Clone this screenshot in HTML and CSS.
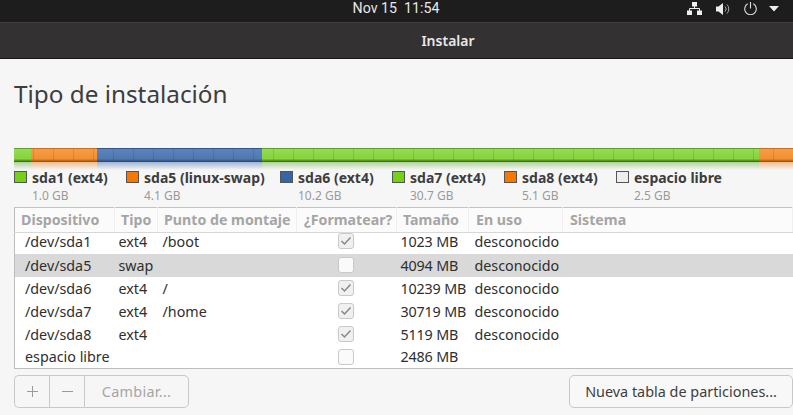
FILE: index.html
```html
<!DOCTYPE html>
<html lang="es">
<head>
    <meta charset="UTF-8">
    <meta name="viewport" content="width=device-width, initial-scale=1.0">
    <title>Instalar</title>
    <link rel="stylesheet" href="styles.css">
</head>
<body>
    <!-- Top panel -->
    <div class="panel">
        <div class="clock">Nov 15&nbsp;&nbsp;11:54</div>
        <div class="tray">
            <svg class="tray-net" width="15" height="13" viewBox="0 0 15 13">
                <path fill="#eee" d="M5 0h5v4.500H5zM0 8.500h5V13H0zM10 8.500h5V13h-5z"/>
                <path fill="none" stroke="#eee" d="M7.500 4v3M2.500 9V6.500h10V9"/>
            </svg>
            <svg class="tray-vol" width="14" height="12" viewBox="0 0 14 12">
                <path fill="#eee" d="M0 3.500h2.500L7 0v12L2.500 8.500H0z"/>
                <path fill="none" stroke="#aaa" d="M9 3.500a3.500 3.500 0 0 1 0 5M11 1.500a6.500 6.500 0 0 1 0 9"/>
            </svg>
            <svg class="tray-pow" width="13" height="13" viewBox="0 0 13 13">
                <path fill="none" stroke="#ddd" stroke-width="1.100" d="M3.700 1.800a5.800 5.800 0 1 0 5.600 0M6.500 0v6.500"/>
            </svg>
            <svg class="tray-arrow" width="10" height="6" viewBox="0 0 10 6">
                <path fill="#eee" d="M0 0h10L5 5.500z"/>
            </svg>
        </div>
    </div>

    <div class="titlebar">Instalar</div>

    <div class="content">
        <h1>Tipo de instalación</h1>

        <!-- Partition bar -->
        <div class="disk-bar">
            <div class="seg seg-green" style="width: 17px"></div>
            <div class="seg seg-orange" style="width: 66px"></div>
            <div class="seg seg-blue" style="width: 165px"></div>
            <div class="seg seg-green" style="width: 497px"></div>
            <div class="seg seg-orange" style="width: 34px"></div>
        </div>

        <!-- Legend -->
        <div class="legend">
            <div class="legend-item item-sda1">
                <span class="swatch swatch-green"></span>
                <div><div class="legend-name">sda1 (ext4)</div><div class="legend-size">1.0 GB</div></div>
            </div>
            <div class="legend-item item-sda5">
                <span class="swatch swatch-orange"></span>
                <div><div class="legend-name">sda5 (linux-swap)</div><div class="legend-size">4.1 GB</div></div>
            </div>
            <div class="legend-item item-sda6">
                <span class="swatch swatch-blue"></span>
                <div><div class="legend-name">sda6 (ext4)</div><div class="legend-size">10.2 GB</div></div>
            </div>
            <div class="legend-item item-sda7">
                <span class="swatch swatch-green"></span>
                <div><div class="legend-name">sda7 (ext4)</div><div class="legend-size">30.7 GB</div></div>
            </div>
            <div class="legend-item item-sda8">
                <span class="swatch swatch-orange"></span>
                <div><div class="legend-name">sda8 (ext4)</div><div class="legend-size">5.1 GB</div></div>
            </div>
            <div class="legend-item">
                <span class="swatch swatch-free"></span>
                <div><div class="legend-name">espacio libre</div><div class="legend-size">2.5 GB</div></div>
            </div>
        </div>

        <!-- Partition table -->
        <table class="parts">
            <thead>
                <tr>
                    <th class="col-dev">Dispositivo</th>
                    <th class="col-type">Tipo</th>
                    <th class="col-mount">Punto de montaje</th>
                    <th class="col-format">¿Formatear?</th>
                    <th class="col-size">Tamaño</th>
                    <th class="col-use">En uso</th>
                    <th class="col-sys">Sistema</th>
                </tr>
            </thead>
            <tbody>
                <tr class="row-first">
                    <td>/dev/sda1</td><td class="cell-type">ext4</td><td>/boot</td>
                    <td class="cell-check"><span class="check is-on"><svg width="12" height="10" viewBox="0 0 12 10"><path fill="none" stroke="#888" stroke-width="1.500" d="M1.500 5l3 3 6-6.500"/></svg></span></td>
                    <td class="cell-size">1023 MB</td><td class="cell-use">desconocido</td><td></td>
                </tr>
                <tr class="selected">
                    <td>/dev/sda5</td><td class="cell-type">swap</td><td></td>
                    <td class="cell-check"><span class="check"></span></td>
                    <td class="cell-size">4094 MB</td><td class="cell-use">desconocido</td><td></td>
                </tr>
                <tr>
                    <td>/dev/sda6</td><td class="cell-type">ext4</td><td>/</td>
                    <td class="cell-check"><span class="check is-on"><svg width="12" height="10" viewBox="0 0 12 10"><path fill="none" stroke="#888" stroke-width="1.500" d="M1.500 5l3 3 6-6.500"/></svg></span></td>
                    <td class="cell-size">10239 MB</td><td class="cell-use">desconocido</td><td></td>
                </tr>
                <tr>
                    <td>/dev/sda7</td><td class="cell-type">ext4</td><td>/home</td>
                    <td class="cell-check"><span class="check is-on"><svg width="12" height="10" viewBox="0 0 12 10"><path fill="none" stroke="#888" stroke-width="1.500" d="M1.500 5l3 3 6-6.500"/></svg></span></td>
                    <td class="cell-size">30719 MB</td><td class="cell-use">desconocido</td><td></td>
                </tr>
                <tr>
                    <td>/dev/sda8</td><td class="cell-type">ext4</td><td></td>
                    <td class="cell-check"><span class="check is-on"><svg width="12" height="10" viewBox="0 0 12 10"><path fill="none" stroke="#888" stroke-width="1.500" d="M1.500 5l3 3 6-6.500"/></svg></span></td>
                    <td class="cell-size">5119 MB</td><td class="cell-use">desconocido</td><td></td>
                </tr>
                <tr>
                    <td class="cell-free" colspan="2">espacio libre</td><td></td>
                    <td class="cell-check"><span class="check"></span></td>
                    <td class="cell-size">2486 MB</td><td></td><td></td>
                </tr>
            </tbody>
        </table>

        <!-- Buttons -->
        <div class="actions">
            <div class="btn-group">
                <button class="btn btn-icon" type="button" disabled><svg width="11" height="11" viewBox="0 0 11 11"><path stroke="#999" d="M5.500 0v11M0 5.500h11"/></svg></button>
                <button class="btn btn-icon" type="button" disabled><svg width="11" height="11" viewBox="0 0 11 11"><path stroke="#999" d="M0 5.500h11"/></svg></button>
                <button class="btn btn-change" type="button" disabled>Cambiar...</button>
            </div>
            <button class="btn btn-new" type="button">Nueva tabla de particiones...</button>
        </div>
    </div>
</body>
</html>
```

FILE: styles.css
```css
body {
    font-family: "Noto Sans", "Open Sans", sans-serif;
    font-size: 14px;
    margin: 0;
    padding: 0;
    height: 415px;
    overflow: hidden;
    background-color: #f6f6f6;
    color: #3d3d3d;
}

/* top panel */
.panel {
    display: flex;
    justify-content: center;
    position: relative;
    height: 22px;
    background-color: #1d1d1d;
    border-bottom: 1px solid #3f3e3e;
}
.clock {
    font-family: Roboto, "Noto Sans", sans-serif;
    color: #e8e8e8;
    font-size: 14.200px;
    line-height: 17px;
    margin-right: 1px;
}
.tray {
    position: absolute;
    top: 1px;
    right: 14px;
    height: 14px;
    display: flex;
    align-items: center;
}
.tray-net { margin-right: 14px; }
.tray-vol { margin-right: 14px; margin-top: 2px; }
.tray-pow { margin-right: 12px; }
.tray-arrow { margin-top: 2px; }

.titlebar {
    height: 35px;
    line-height: 36px;
    padding-left: 103px;
    text-align: center;
    color: #e8e8e8;
    font-size: 14px;
    font-weight: 600;
    background-color: #333131;
    border-bottom: 1px solid #191919;
}

.content {
    padding-top: 18px;
}
h1 {
    margin: 0 0 0 14px;
    height: 71px;
    font-size: 24.300px;
    font-weight: 400;
    line-height: 33px;
    color: #3d3d3d;
}

/* partition bar */
.disk-bar {
    display: flex;
    position: relative;
    margin-left: 14px;
    height: 22px;
}
/* tick marks run over all the segments */
.disk-bar::after {
    content: "";
    position: absolute;
    left: 0;
    right: 0;
    top: 1px;
    height: 12px;
    background-image: linear-gradient(to right, transparent 19px, rgba(0, 0, 0, 0.1) 19px, rgba(0, 0, 0, 0.1) 20px);
    background-size: 20px 12px;
}
.seg {
    flex: none;
    height: 22px;
    box-sizing: border-box;
    border-top: 1px solid;
    background-size: 100% 13px, 100% 8px;
    background-repeat: no-repeat, no-repeat;
    background-position: 0 0, 0 13px;
}
.seg-green {
    border-top-color: #5f9f2b;
    background-image:
        linear-gradient(#93dd4f, #86d23f 75%, #5c9a25 88%, #2f5a10),
        linear-gradient(rgba(120, 180, 80, 0.55), rgba(246, 246, 246, 0));
}
.seg-orange {
    border-top-color: #c9701c;
    background-image:
        linear-gradient(#f89c44, #f09035 75%, #c46c18 88%, #8a4a0e),
        linear-gradient(rgba(230, 140, 60, 0.55), rgba(246, 246, 246, 0));
}
.seg-blue {
    border-top-color: #34568c;
    background-image:
        linear-gradient(#5a84bb, #4f79b0 75%, #3c5e90 88%, #2b4369),
        linear-gradient(rgba(90, 125, 175, 0.55), rgba(246, 246, 246, 0));
}

/* legend */
.legend {
    display: flex;
    margin: 1px 0 0 14px;
    height: 36px;
}
.legend-item {
    display: flex;
    flex: none;
    gap: 5px;
}
.item-sda1 { width: 112px; }
.item-sda5 { width: 154px; }
.item-sda6 { width: 112px; }
.item-sda7 { width: 112px; }
.item-sda8 { width: 112px; }
.swatch {
    flex: none;
    box-sizing: border-box;
    width: 13px;
    height: 12px;
    border: 1px solid #555;
}
.swatch-green { background-color: #73d216; }
.swatch-orange { background-color: #f57900; }
.swatch-blue { background-color: #3465a4; }
.swatch-free { background-color: #eeeeee; }
.legend-name {
    font-size: 14px;
    line-height: 15px;
    margin-top: -1px;
    font-weight: 700;
    white-space: nowrap;
}
.legend-size {
    font-size: 12px;
    line-height: 15px;
    margin-top: 2.500px;
    color: #9a9a9a;
}

/* partition table */
.parts {
    margin-left: 14px;
    width: 779px;
    table-layout: fixed;
    border-collapse: collapse;
    background: white;
    border-left: 1px solid #bdbdbd;
    border-top: 1px solid #c4c4c4;
    border-bottom: 1px solid #bdbdbd;
}
.col-dev { width: 100px; }
.col-type { width: 43px; }
.col-mount { width: 139px; }
.col-format { width: 100px; }
.col-size { width: 72px; }
.col-use { width: 94px; }
th {
    height: 25px;
    padding: 0 0 2px 6px;
    box-sizing: border-box;
    text-align: left;
    white-space: nowrap;
    overflow: hidden;
    font-size: 14.200px;
    font-weight: 700;
    color: #a5a5a5;
    background-color: #fbfbfb;
    border-right: 1px solid #efefef;
    border-bottom: 1px solid #d8d8d8;
}
th.col-format, th.col-use, th.col-sys {
    padding-left: 7px;
}
td {
    height: 23px;
    padding: 0 0 0 5px;
    box-sizing: border-box;
    font-size: 14.300px;
    line-height: 19px;
    color: #2e2e2e;
    white-space: nowrap;
    overflow: hidden;
}
td:first-child {
    padding-left: 10px;
}
td.cell-free {
    padding-left: 10px;
}
td.cell-type {
    padding-left: 4px;
}
td.cell-size {
    padding-left: 4px;
    letter-spacing: -0.150px;
}
td.cell-use {
    padding-left: 6px;
}
/* first row is scrolled a little under the header */
.row-first td {
    height: 21px;
    line-height: 17px;
    padding-bottom: 3px;
}
.selected td {
    background-color: #d9d9d9;
}
td.cell-check {
    text-align: center;
    padding: 0 2px 0 0;
    line-height: 0;
}
.row-first td.cell-check {
    vertical-align: top;
    padding-bottom: 0;
}
.check {
    display: inline-flex;
    align-items: center;
    justify-content: center;
    box-sizing: border-box;
    width: 16px;
    height: 16px;
    vertical-align: middle;
    border: 1px solid #c9c9c9;
    border-radius: 3px;
    background-color: #fafafa;
}
.check.is-on {
    background-color: #f0f0f0;
}

/* buttons */
.actions {
    display: flex;
    justify-content: space-between;
    margin: 6px 0 0 14px;
}
.btn-group {
    display: flex;
    height: 33px;
}
.btn {
    box-sizing: border-box;
    height: 33px;
    font-family: inherit;
    font-size: 14.400px;
    padding: 0;
    border: 1px solid #c8c8c8;
    background-color: #f6f6f6;
    color: #3d3d3d;
}
.btn-icon {
    display: flex;
    align-items: center;
    justify-content: center;
    width: 35px;
    border-right: none;
}
.btn-icon:first-child {
    border-radius: 5px 0 0 5px;
}
.btn-change {
    width: 105px;
    color: #a5a5a5;
    letter-spacing: 0.300px;
    border-radius: 0 5px 5px 0;
}
.btn-new {
    width: 224px;
    border-radius: 5px;
    background-color: #f8f8f8;
}
```
